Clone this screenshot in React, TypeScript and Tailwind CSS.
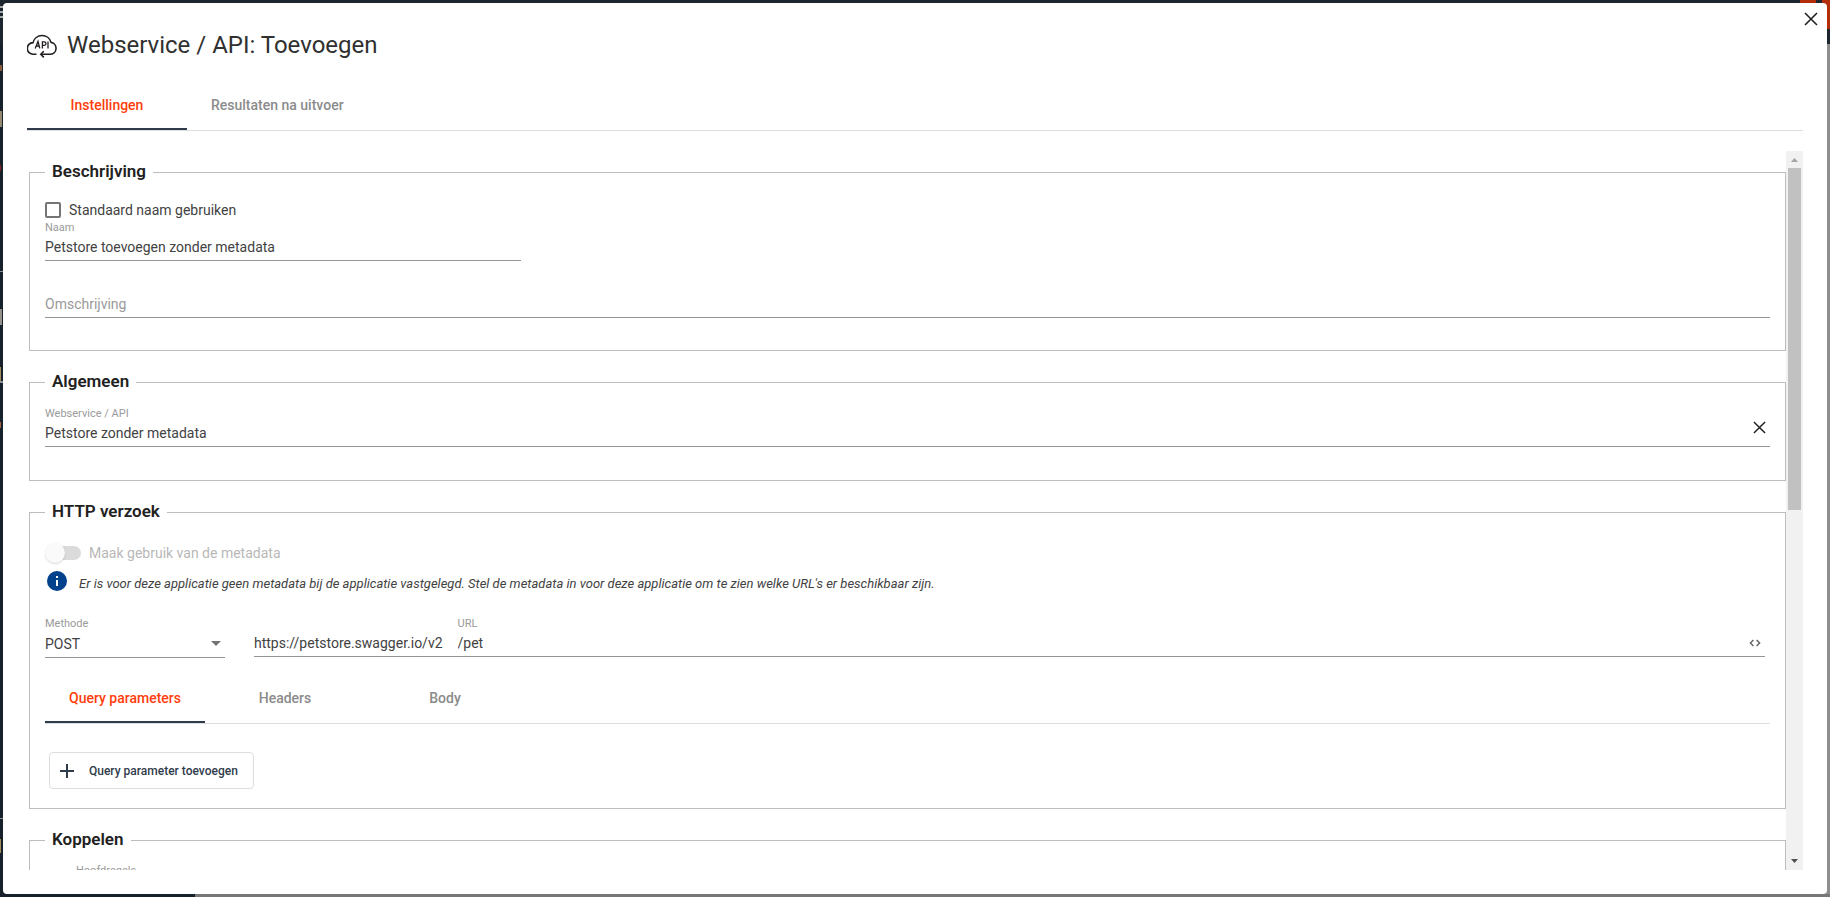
import { useState } from "react";
import type { ReactNode } from "react";

const MAIN_TABS = ["Instellingen", "Resultaten na uitvoer"];
const REQUEST_TABS = ["Query parameters", "Headers", "Body"];

function Tabs({ tabs, className = "" }: { tabs: string[]; className?: string }) {
  const [active, setActive] = useState(tabs[0]);

  return (
    <div role="tablist" className={`flex h-12 border-b border-[#dedede] ${className}`}>
      {tabs.map((tab) => (
        <button
          key={tab}
          type="button"
          role="tab"
          aria-selected={tab === active}
          onClick={() => setActive(tab)}
          className={`h-[47px] min-w-40 border-b-2 px-6 pb-[2px] text-sm font-medium ${
            tab === active ? "border-[#303c4b] text-[#ff3d0c]" : "border-transparent text-[#8b8b8b]"
          }`}
        >
          {tab}
        </button>
      ))}
    </div>
  );
}

function Section({ title, children }: { title: string; children: ReactNode }) {
  return (
    <fieldset className="ml-[2px] border border-[#bdbdbd] px-[15px]">
      <legend className="h-6 px-[7px] text-[17px] leading-[22px] font-semibold text-[#212121]">{title}</legend>
      {children}
    </fieldset>
  );
}

function CloseIcon({ className }: { className?: string }) {
  return (
    <svg viewBox="0 0 14 14" className={className} fill="none" stroke="#212121" strokeWidth="1.6">
      <path d="M1 1l12 12M13 1L1 13" />
    </svg>
  );
}

function ApiCloudIcon() {
  return (
    <svg viewBox="0 0 30 26" className="h-[26px] w-[30px]" fill="none" stroke="#231f20" strokeWidth="1.6">
      <path d="M9.5 22.3H6.3A5.8 5.8 0 0 1 6 10.6a9.3 9.3 0 0 1 18-.2 6 6 0 0 1-.4 11.9H14" />
      <path d="M16.8 19.2l-3 3.1 3 3.1" />
      <path d="M8.2 16.4l2.8-7 1.8 7M9 14h3.4M15.4 16.6V9.8h1.8a1.8 1.8 0 0 1 0 3.6h-1.8M21 9.4v7" strokeWidth="1.3" />
    </svg>
  );
}

function Scrollbar() {
  return (
    <div aria-hidden="true" className="flex w-[17px] shrink-0 flex-col items-center bg-[#f1f1f1]">
      <svg viewBox="0 0 17 17" className="h-[17px] w-[17px]" fill="#a3a3a3">
        <path d="M5 11l3.5-4 3.5 4z" />
      </svg>
      <div className="h-1/2 max-h-[342px] w-[13px] bg-[#c1c1c1]" />
      <svg viewBox="0 0 17 17" className="mt-auto h-[17px] w-[17px]" fill="#505050">
        <path d="M5 6l3.5 4L12 6z" />
      </svg>
    </div>
  );
}

// Dimmed application shell that stays visible around the dialog.
function Backdrop() {
  return (
    <div aria-hidden="true" className="absolute inset-0 flex flex-col bg-[#8f8f8f]">
      <div className="flex h-11 items-start justify-between bg-[#1d262e]">
        <div className="mt-[6px] flex flex-col gap-[3px]">
          <span className="h-[2px] w-6 bg-[#a5a7a9]" />
          <span className="h-[2px] w-6 bg-[#a5a7a9]" />
          <span className="h-[2px] w-6 bg-[#a5a7a9]" />
        </div>
        <div className="flex gap-[6px]">
          <span className="h-[10px] w-4 rounded-b-full bg-[#b32d09]" />
          <span className="h-[29px] w-2 bg-[#b32d09]" />
        </div>
      </div>
      <div className="flex flex-1">
        <div className="flex w-[195px] flex-col bg-[#17212b]">
          <span className="mt-[21px] h-[6px] w-[2px] bg-[#8a5a3c]" />
          <span className="mt-10 h-4 w-[2px] bg-[#94886f]" />
          <span className="mt-[38px] h-[6px] w-px bg-[#7c1f1f]" />
          <span className="mt-[100px] h-px w-full bg-[#8d9195]" />
          <span className="mt-[37px] h-4 w-[2px] bg-[#94908a]" />
          <span className="mt-[42px] h-[14px] w-px bg-[#a08a5c]" />
          <span className="h-[2px] w-full bg-[#8d9195]" />
          <span className="mt-[39px] h-[6px] w-px bg-[#a0603c]" />
          <span className="mt-[390px] h-px w-full bg-[#8d9195]" />
          <span className="mt-5 h-[14px] w-px bg-[#a08a5c]" />
        </div>
        <div className="flex-1 border-b-[3px] border-[#777]" />
      </div>
    </div>
  );
}

export default function App() {
  const [useDefaultName, setUseDefaultName] = useState(false);
  const [name, setName] = useState("Petstore toevoegen zonder metadata");
  const [description, setDescription] = useState("");
  const [service, setService] = useState("Petstore zonder metadata");
  const [method, setMethod] = useState("POST");
  const [path, setPath] = useState("/pet");

  return (
    <div className="relative h-screen overflow-hidden p-[3px] font-[Roboto,sans-serif] text-sm text-[#424242]">
      <Backdrop />

      <div role="dialog" aria-labelledby="title" className="relative flex h-full flex-col rounded bg-white px-6 pb-6">
        <button type="button" aria-label="Sluiten" className="absolute top-[9px] right-[9px]">
          <CloseIcon className="h-[14px] w-[14px]" />
        </button>

        <header className="flex h-20 items-center gap-[10px] pt-1">
          <ApiCloudIcon />
          <h1 id="title" className="text-2xl font-normal text-[#303030]">
            Webservice / API: Toevoegen
          </h1>
        </header>

        <Tabs tabs={MAIN_TABS} />

        <div className="mt-5 flex min-h-0 flex-1">
          <div className="flex min-w-0 flex-1 flex-col gap-[19px] overflow-hidden pt-[9px]">
            <Section title="Beschrijving">
              <label className="mt-[15px] flex h-[21px] items-center gap-2">
                <input
                  type="checkbox"
                  checked={useDefaultName}
                  onChange={(e) => setUseDefaultName(e.target.checked)}
                  className="h-4 w-4 appearance-none rounded-[2px] border-2 border-[#757575] checked:bg-[#757575]"
                />
                Standaard naam gebruiken
              </label>
              <div className="w-[476px]">
                <label htmlFor="name" className="block h-4 text-[11px] leading-4 text-[#9a9a9a]">
                  Naam
                </label>
                <input
                  id="name"
                  value={name}
                  onChange={(e) => setName(e.target.value)}
                  className="block h-[25px] w-full border-b border-[#949494] pb-[3px] outline-none"
                />
              </div>
              <input
                aria-label="Omschrijving"
                placeholder="Omschrijving"
                value={description}
                onChange={(e) => setDescription(e.target.value)}
                className="my-8 block h-[25px] w-full border-b border-[#949494] pb-[3px] outline-none placeholder:text-[#9a9a9a]"
              />
            </Section>

            <Section title="Algemeen">
              <div className="relative mt-3 mb-[33px]">
                <label htmlFor="service" className="block h-4 text-[11px] leading-4 text-[#9a9a9a]">
                  Webservice / API
                </label>
                <input
                  id="service"
                  value={service}
                  onChange={(e) => setService(e.target.value)}
                  className="block h-[25px] w-full border-b border-[#949494] pb-[3px] outline-none"
                />
                <button
                  type="button"
                  aria-label="Wissen"
                  onClick={() => setService("")}
                  className="absolute top-[15px] right-1"
                >
                  <CloseIcon className="h-[13px] w-[13px]" />
                </button>
              </div>
            </Section>

            <Section title="HTTP verzoek">
              <label className="mt-[19px] flex h-5 items-center gap-2 text-[#b8b8b8]">
                <input type="checkbox" role="switch" disabled className="sr-only" />
                <span className="flex h-[14px] w-9 items-center rounded-full bg-linear-to-r from-white from-20% to-[#dbdbdb] to-20%">
                  <span className="h-5 w-5 rounded-full bg-[#fafafa] shadow-[0_1px_2px_rgba(0,0,0,0.15)]" />
                </span>
                Maak gebruik van de metadata
              </label>
              <div className="mt-[6px] flex h-6 items-center gap-3 pl-[2px]">
                <svg viewBox="0 0 20 20" className="h-5 w-5">
                  <circle cx="10" cy="10" r="10" fill="#02418b" />
                  <path d="M9 5h2v2H9zM9 9h2v6H9z" fill="#fff" />
                </svg>
                <p className="pt-[6px] text-[13px] italic">
                  Er is voor deze applicatie geen metadata bij de applicatie vastgelegd. Stel de metadata in voor deze
                  applicatie om te zien welke URL's er beschikbaar zijn.
                </p>
              </div>

              <div className="mt-[23px] flex gap-[29px] pr-[5px]">
                <div className="relative w-[180px]">
                  <label htmlFor="method" className="block h-4 text-[11px] leading-4 text-[#9a9a9a]">
                    Methode
                  </label>
                  <select
                    id="method"
                    value={method}
                    onChange={(e) => setMethod(e.target.value)}
                    className="block h-[26px] w-full appearance-none border-b border-[#949494] pb-[2px] outline-none"
                  >
                    <option>GET</option>
                    <option>POST</option>
                    <option>PUT</option>
                    <option>DELETE</option>
                  </select>
                  <svg viewBox="0 0 10 5" className="pointer-events-none absolute right-1 bottom-3 h-[5px] w-[10px]" fill="#757575">
                    <path d="M0 0h10L5 5z" />
                  </svg>
                </div>
                <div className="flex h-[41px] flex-1 items-end border-b border-[#949494]">
                  <span className="h-6 leading-[22px]">https://petstore.swagger.io/v2</span>
                  <div className="ml-[15px] flex-1">
                    <label htmlFor="path" className="block h-4 text-[11px] leading-4 text-[#9a9a9a]">
                      URL
                    </label>
                    <input
                      id="path"
                      value={path}
                      onChange={(e) => setPath(e.target.value)}
                      className="block h-6 w-full pb-[3px] outline-none"
                    />
                  </div>
                  <button type="button" aria-label="Expressie bewerken" className="mr-1 mb-2">
                    <svg viewBox="0 0 12 10" className="h-[10px] w-3" fill="none" stroke="#666" strokeWidth="1.5">
                      <path d="M4.4 2L1.4 5l3 3M7.6 2l3 3-3 3" />
                    </svg>
                  </button>
                </div>
              </div>

              <Tabs tabs={REQUEST_TABS} className="mt-[18px]" />

              <button
                type="button"
                className="mt-7 mb-[19px] ml-1 flex h-[37px] items-center gap-[15px] rounded border border-[#dedede] pr-[15px] pl-[10px] text-xs font-medium text-[#303c4b]"
              >
                <svg viewBox="0 0 14 14" className="h-[14px] w-[14px]" fill="none" stroke="#303c4b" strokeWidth="2">
                  <path d="M7 0v14M0 7h14" />
                </svg>
                Query parameter toevoegen
              </button>
            </Section>

            <Section title="Koppelen">
              <label htmlFor="mainRules" className="mt-[11px] ml-[31px] block h-4 text-[11px] leading-4 text-[#9a9a9a]">
                Hoofdregels
              </label>
              <input id="mainRules" className="block h-[25px] w-full border-b border-[#949494] outline-none" />
            </Section>
          </div>

          <Scrollbar />
        </div>
      </div>
    </div>
  );
}
